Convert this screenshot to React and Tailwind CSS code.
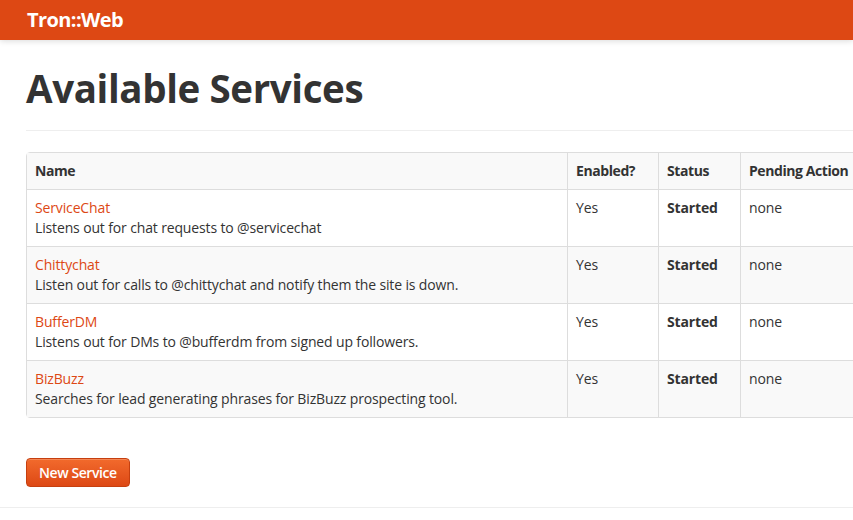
import React from "react";

const SERVICES = [
  { name: "ServiceChat", desc: "Listens out for chat requests to @servicechat" },
  { name: "Chittychat", desc: "Listen out for calls to @chittychat and notify them the site is down." },
  { name: "BufferDM", desc: "Listens out for DMs to @bufferdm from signed up followers." },
  { name: "BizBuzz", desc: "Searches for lead generating phrases for BizBuzz prospecting tool." },
];

export default function App() {
  return (
    <div className="w-[853px] h-[520px] overflow-hidden bg-white text-[14px] leading-5 text-[#333] tracking-[-0.01em] font-['Open_Sans','Liberation_Sans',sans-serif]">
      <div className="h-10 bg-[#dd4814] shadow-[0_1px_6px_rgba(0,0,0,0.15)]">
        <div className="w-[940px] ml-[27px] h-10 flex items-center">
          <span className="text-white font-bold text-[20px] tracking-[-0.03em]">Tron::Web</span>
        </div>
      </div>

      <div className="w-[940px] ml-[26px]">
        <h1 className="mt-[26px] text-[38.5px] leading-[44px] font-bold text-[#333] tracking-[-0.01em]">Available Services</h1>
        <div className="mt-[20px] border-t border-[#eee]" />

        <table className="mt-[21px] w-[940px] border-separate border-spacing-0 border border-[#ddd] rounded-[4px]">
          <thead>
            <tr className="bg-[#f9f9f9] tracking-[-0.03em]">
              <th className="w-[540px] text-left font-bold px-2 py-2 align-top">Name</th>
              <th className="w-[91px] text-left font-bold px-2 py-2 border-l border-[#ddd] align-top">Enabled?</th>
              <th className="w-[82px] text-left font-bold px-2 py-2 border-l border-[#ddd] align-top">Status</th>
              <th className="w-[118px] text-left font-bold px-2 py-2 border-l border-[#ddd] align-top whitespace-nowrap">Pending Action</th>
              <th className="text-left font-bold px-2 py-2 border-l border-[#ddd] align-top"></th>
            </tr>
          </thead>
          <tbody>
            {SERVICES.map((s, i) => (
              <tr key={s.name} className={i % 2 === 1 ? "bg-[#f9f9f9]" : "bg-white"}>
                <td className="px-2 py-2 border-t border-[#ddd] align-top">
                  <a className="text-[#dd4814]">{s.name}</a>
                  <br />
                  {s.desc}
                </td>
                <td className="px-2 py-2 border-t border-l border-[#ddd] align-top">Yes</td>
                <td className="px-2 py-2 border-t border-l border-[#ddd] align-top font-bold">Started</td>
                <td className="px-2 py-2 border-t border-l border-[#ddd] align-top">none</td>
                <td className="px-2 py-2 border-t border-l border-[#ddd] align-top"></td>
              </tr>
            ))}
          </tbody>
        </table>

        <button className="mt-10 h-[29px] px-3 rounded-[4px] border border-[#c63f0f] bg-linear-to-b from-[#f26a2c] to-[#dd4814] text-white font-semibold text-[14px] tracking-[-0.03em] shadow-[inset_0_1px_0_rgba(255,255,255,0.2)]">
          New Service
        </button>
      </div>

      <div className="mt-5 border-t border-[#eee]" />
    </div>
  );
}
